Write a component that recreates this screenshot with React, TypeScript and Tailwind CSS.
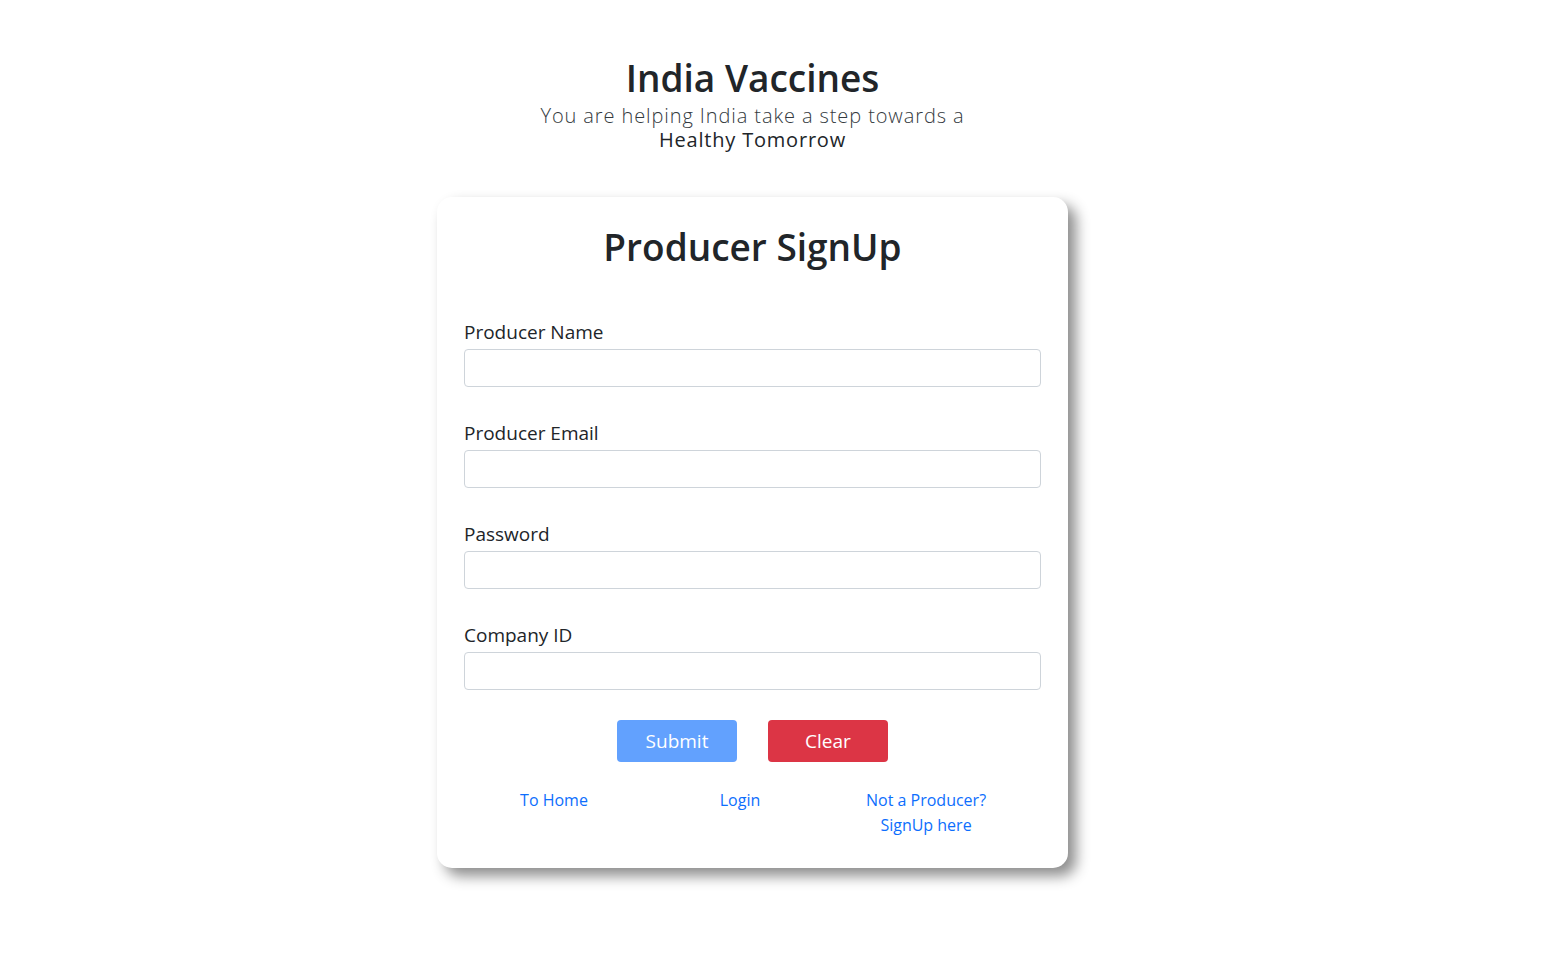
import { useState } from "react";

const fields = [
  { id: "name", label: "Producer Name", type: "text" },
  { id: "email", label: "Producer Email", type: "email" },
  { id: "password", label: "Password", type: "password" },
  { id: "company", label: "Company ID", type: "text" },
];

export default function App() {
  const [values, setValues] = useState<Record<string, string>>({});

  return (
    <div
      className="min-h-screen bg-white text-[#212529] pt-[54px] pr-[46px]"
      style={{ fontFamily: '"Open Sans", "Noto Sans", sans-serif' }}
    >
      {/* Header */}
      <div className="text-center">
        <h1 className="text-[37px] leading-[48px] font-semibold">India Vaccines</h1>
        <p className="mt-[2px] text-[20px] leading-[24px] font-light tracking-[0.9px] text-[#343a40]">
          You are helping India take a step towards a
        </p>
        <p className="text-[20px] leading-[24px] tracking-[0.8px]">Healthy Tomorrow</p>
      </div>

      {/* Card */}
      <div className="mx-auto mt-[45px] w-[631px] rounded-[15px] bg-white px-[27px] pt-[26px] pb-[30px] shadow-[8px_8px_14px_rgba(0,0,0,0.45)]">
        <h2 className="text-center text-[37px] leading-[48px] font-semibold">Producer SignUp</h2>

        <form className="mt-[49px] flex flex-col gap-[34px]" onSubmit={(e) => e.preventDefault()}>
          {fields.map((f) => (
            <div key={f.id}>
              <label htmlFor={f.id} className="block text-[19px] leading-[24px]">
                {f.label}
              </label>
              <input
                id={f.id}
                type={f.type}
                value={values[f.id] ?? ""}
                onChange={(e) => setValues({ ...values, [f.id]: e.target.value })}
                className="mt-[5px] block h-[38px] w-full rounded-[4px] border border-[#ced4da] px-3 text-base outline-none"
              />
            </div>
          ))}
        </form>

        <div className="mt-[30px] flex justify-center gap-[31px]">
          <button
            disabled
            className="h-[42px] w-[120px] rounded-[4px] bg-[#62a1fe] text-[19px] text-white"
          >
            Submit
          </button>
          <button
            onClick={() => setValues({})}
            className="h-[42px] w-[120px] rounded-[4px] bg-[#dc3545] text-[19px] text-white"
          >
            Clear
          </button>
        </div>

        <div className="mt-[26px] ml-[-3px] flex text-[16px] leading-[25px] text-[#0d6efd]">
          <div className="w-[186px] text-center">
            <a href="#">To Home</a>
          </div>
          <div className="w-[186px] text-center">
            <a href="#">Login</a>
          </div>
          <div className="w-[186px] text-center">
            <a href="#">
              Not a Producer?
              <br />
              SignUp here
            </a>
          </div>
        </div>
      </div>
    </div>
  );
}
